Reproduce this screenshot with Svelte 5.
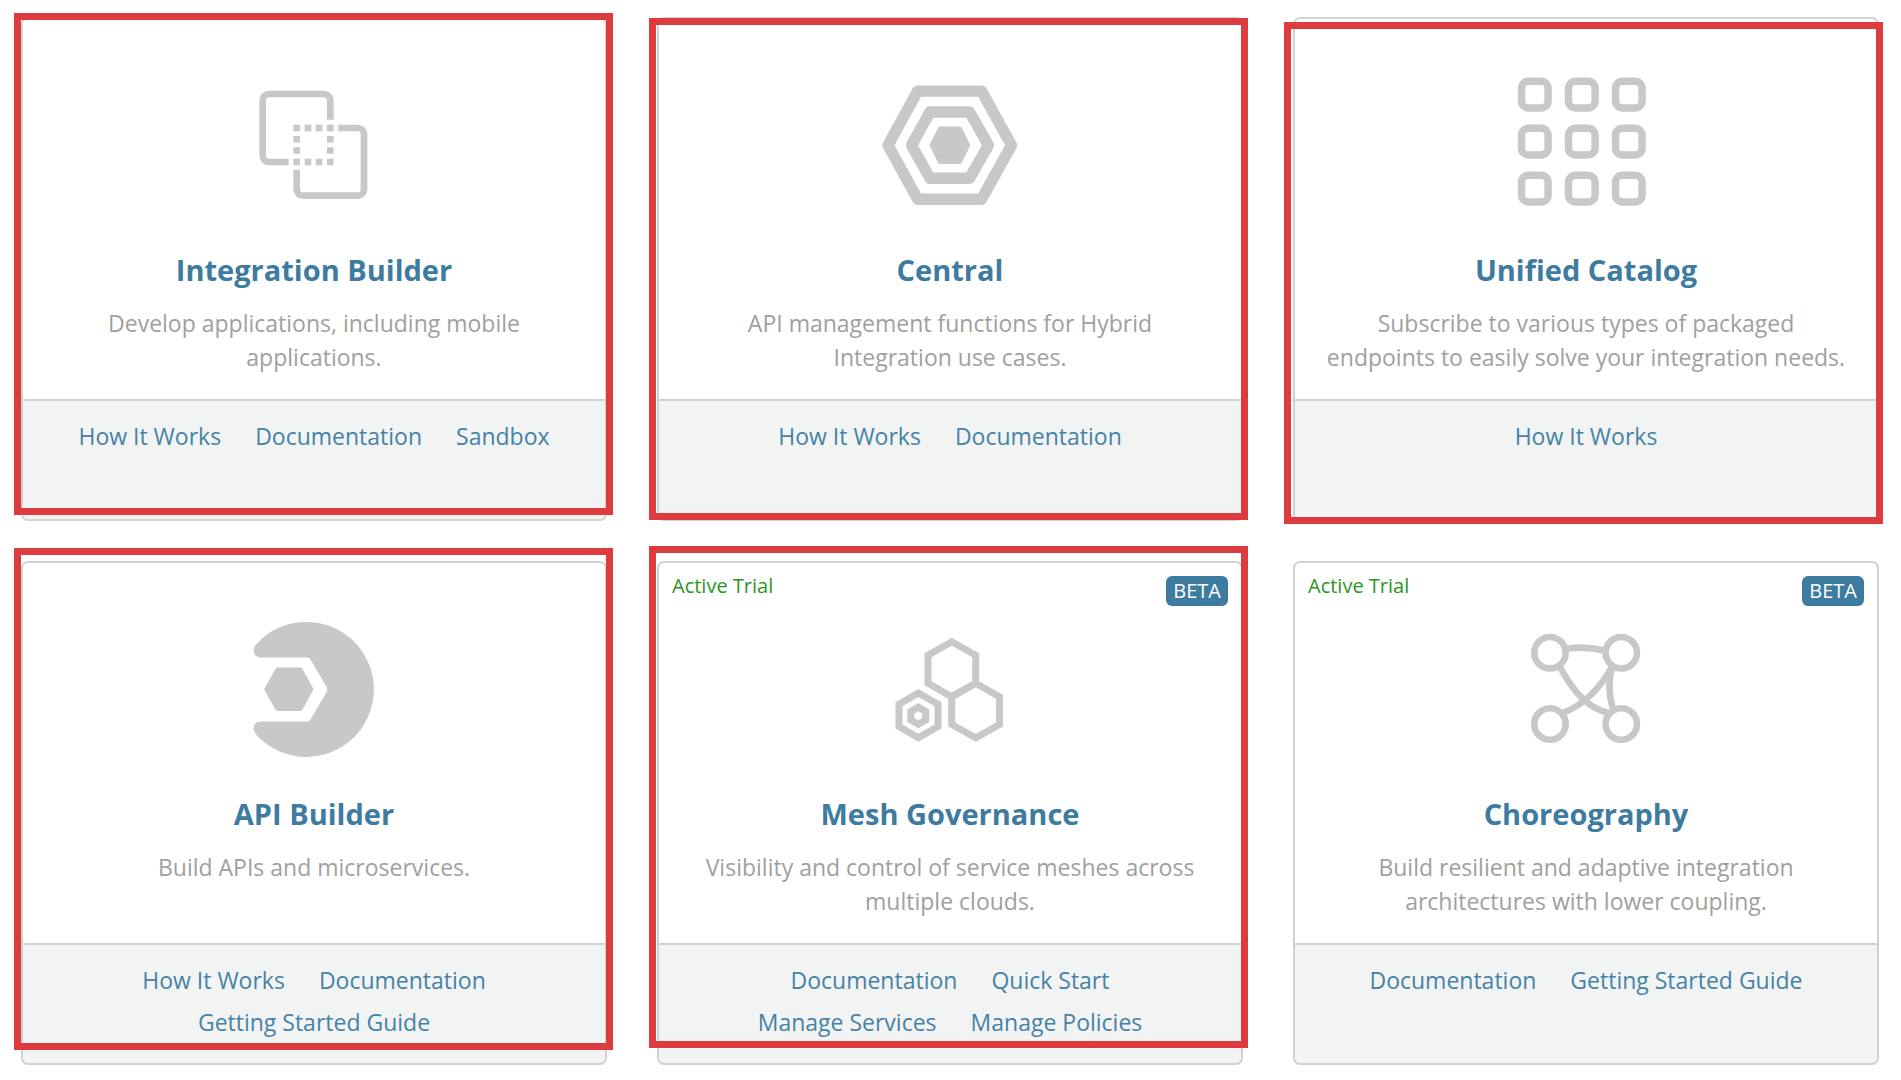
<script>
    const products = [
        {
            name: "Integration Builder",
            icon: "integration",
            description: "Develop applications, including mobile applications.",
            links: ["How It Works", "Documentation", "Sandbox"],
            frame: { x: -7, y: -4 }
        },
        {
            name: "Central",
            icon: "central",
            description: "API management functions for Hybrid Integration use cases.",
            links: ["How It Works", "Documentation"],
            frame: { x: -8, y: 1 }
        },
        {
            name: "Unified Catalog",
            icon: "catalog",
            description: "Subscribe to various types of packaged endpoints to easily solve your integration needs.",
            links: ["How It Works"],
            frame: { x: -9, y: 5 }
        },
        {
            name: "API Builder",
            icon: "api",
            description: "Build APIs and microservices.",
            links: ["How It Works", "Documentation", "Getting Started Guide"],
            frame: { x: -7, y: -13 }
        },
        {
            name: "Mesh Governance",
            icon: "mesh",
            description: "Visibility and control of service meshes across multiple clouds.",
            links: ["Documentation", "Quick Start", "Manage Services", "Manage Policies"],
            trial: true,
            beta: true,
            frame: { x: -8, y: -15 }
        },
        {
            name: "Choreography",
            icon: "choreography",
            description: "Build resilient and adaptive integration architectures with lower coupling.",
            links: ["Documentation", "Getting Started Guide"],
            trial: true,
            beta: true
        }
    ]

    //ICON GRIDS//
    const cells = [15.5, 62.5, 109.5]
    const dots = [
        [62.7, 63], [74, 63], [85, 63], [96.3, 63],
        [62.7, 74.3], [96.3, 74.3],
        [62.7, 85.5], [96.3, 85.5],
        [62.7, 97], [74, 97], [85, 97], [96.3, 97]
    ]
</script>

<main>
    {#each products as product}
        <div class="product">
            <article>
                <div class="info">
                    {#if product.trial}
                        <span class="trial">Active Trial</span>
                    {/if}
                    {#if product.beta}
                        <span class="beta">BETA</span>
                    {/if}

                    <svg viewBox="0 0 160 160" aria-hidden="true">
                        {#if product.icon === "integration"}
                            <g class="line" stroke-width="6.7">
                                <path d="M54.7 97H35.2a6.5 6.5 0 0 1-6.5-6.5v-55a6.5 6.5 0 0 1 6.5-6.5h54.6a6.5 6.5 0 0 1 6.5 6.5v19.2" />
                                <path d="M104.3 63h19.2a6.5 6.5 0 0 1 6.5 6.5v54.7a6.5 6.5 0 0 1-6.5 6.5H69.2a6.5 6.5 0 0 1-6.5-6.5v-19.5" />
                            </g>
                            {#each dots as [x, y]}
                                <rect class="solid" x={x - 3.3} y={y - 3.3} width="6.6" height="6.6" />
                            {/each}
                        {:else if product.icon === "central"}
                            <g class="line" stroke-width="11.4" stroke-linejoin="round">
                                <path d="M18 80.2 47.7 26.1H111.5L141.5 80.2 111.5 134.3H47.7Z" />
                                <path d="M41.5 80.2 60 47H99.6L118.4 80.2 99.6 113.3H60Z" />
                            </g>
                            <path class="solid rounded" d="M61.6 80.2 70 63.4H89.8L98.2 80.2 89.8 97H70Z" />
                        {:else if product.icon === "catalog"}
                            <g class="line" stroke-width="7.5">
                                {#each cells as y}
                                    {#each cells as x}
                                        <rect {x} y={y + 0.8} width="26.6" height="26.6" rx="7" />
                                    {/each}
                                {/each}
                            </g>
                        {:else if product.icon === "api"}
                            <path class="solid" d="M23 34.4A67.5 67.5 0 1 1 23 126.4Q19.5 122.5 19.5 119.5 20 112.5 27 112.5H73Q75.5 112.5 76.5 110.5L92.5 83Q93.8 80.4 92.5 78L76.5 50.5Q75.5 48.4 73 48.4H27Q20 48.4 19.5 41.5 19.5 38 23 34.4Z" />
                            <path class="solid rounded" d="M32.3 80.3 43.5 60.4H66.5L77.3 80.3 66.5 100.1H43.5Z" />
                        {:else if product.icon === "mesh"}
                            <g class="line" stroke-width="7">
                                <path d="M81.7 32.7 105.7 46.3V74.3L81.7 87.7 58 74.3V46.3Z" />
                                <path d="M105.7 74.3 129.5 87.7V115.5L105.7 128.8 81.7 115.5V87.7Z" />
                                <path d="M48.3 84 68 95.3V117.5L48.3 128.8 29 117.5V95.3Z" />
                                <path d="M48.3 98 55.7 102.4V110.9L48.3 115.3 40.8 110.9V102.4Z" />
                            </g>
                        {:else}
                            <g class="line" stroke-width="6.6">
                                <circle cx="44" cy="43.7" r="15.7" />
                                <circle cx="115.3" cy="43.7" r="15.7" />
                                <circle cx="44" cy="115" r="15.7" />
                                <circle cx="115.3" cy="115" r="15.7" />
                                <path d="M61 39.8Q79 36.8 98 41.5" />
                                <path d="M106 58Q100.5 78 106.7 99" />
                                <path d="M54 58Q75 98 102 103.7" />
                                <path d="M106 58Q87 92 57 104" />
                            </g>
                        {/if}
                    </svg>

                    <h2>{product.name}</h2>
                    <p>{product.description}</p>
                </div>
                <footer>
                    {#each product.links as link}
                        <a href="#{link.toLowerCase().replaceAll(' ', '-')}">{link}</a>
                    {/each}
                </footer>
            </article>
            {#if product.frame}
                <div class="frame" style="left: {product.frame.x}px; top: {product.frame.y}px"></div>
            {/if}
        </div>
    {/each}
</main>

<style>
    :global(body){
        background-color: white;
    }

    main{
        display: grid;
        grid-template-columns: repeat(3, 1fr);
        gap: 40px 50px;
        padding: 17px 22px 15px 21px;
        font-family: "Open Sans", "Noto Sans", sans-serif;
        font-size: 23px;
        line-height: 34px;
        text-align: center;
    }

    .product{
        position: relative;
        display: flex;
    }

    article{
        box-sizing: border-box;
        display: flex;
        flex-direction: column;
        width: 100%;
        min-height: 504px;
        border: 2px solid #d0d1d1;
        border-radius: 7px;
        overflow: hidden;
    }

    .info{
        position: relative;
        display: flex;
        flex-direction: column;
        align-items: center;
        min-height: 334px;
        padding: 46px 28px 0;
    }

    svg{
        width: 160px;
        height: 160px;
    }

    .line{
        fill: none;
        stroke: #c8c8c6;
    }

    .solid{
        fill: #c8c8c6;
    }

    .rounded{
        stroke: #c8c8c6;
        stroke-width: 4px;
        stroke-linejoin: round;
    }

    h2{
        margin: 27px 0 18px;
        color: #3e7ba0;
        font-size: 29px;
        line-height: 36px;
        font-weight: 700;
    }

    p{
        margin: 0;
        color: #a0a0a0;
    }

    .trial{
        position: absolute;
        left: 13px;
        top: 9px;
        color: #2b961c;
        font-size: 20px;
        line-height: 28px;
    }

    .beta{
        position: absolute;
        right: 13px;
        top: 13px;
        padding: 0 7px;
        border-radius: 6px;
        background-color: #3e7ba0;
        color: white;
        font-size: 20px;
        line-height: 30px;
    }

    footer{
        display: flex;
        flex-wrap: wrap;
        flex-grow: 1;
        align-content: flex-start;
        justify-content: center;
        column-gap: 34px;
        padding: 14px 40px;
        border-top: 2px solid #d0d1d1;
        background-color: #f2f4f4;
    }

    a{
        color: #4682a6;
        line-height: 42px;
        text-decoration: none;
    }

    /* highlight drawn over the card */
    .frame{
        position: absolute;
        box-sizing: border-box;
        width: calc(100% + 13px);
        height: calc(100% - 2px);
        border: 7px solid #dd3b3d;
        pointer-events: none;
    }
</style>
